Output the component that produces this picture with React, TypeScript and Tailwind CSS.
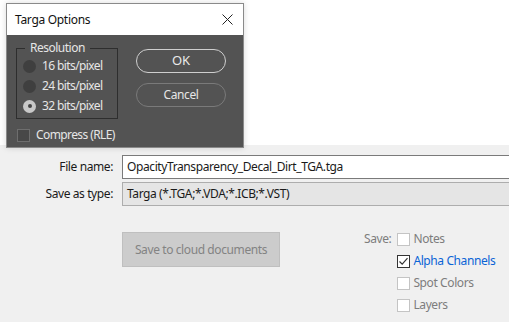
import React from 'react';

const font = { fontFamily: '"Noto Sans", "Open Sans", sans-serif' };

const Radio = ({ checked, label }: { checked?: boolean; label: string }) => (
  <div className="flex items-center h-[20px]">
    <div
      className={`w-[13px] h-[13px] rounded-full flex items-center justify-center ${
        checked ? 'bg-[#c8c8c8]' : 'bg-[#3f3f3f]'
      }`}
    >
      {checked && <div className="w-[4px] h-[4px] rounded-full bg-[#444]" />}
    </div>
    <span className="ml-[6px] text-[12px] tracking-[-0.6px] text-[#e6e6e6] leading-none">{label}</span>
  </div>
);

const Check = ({ checked, label, blue }: { checked?: boolean; label: string; blue?: boolean }) => (
  <div className="flex items-center h-[22px]">
    <div
      className={`w-[13px] h-[13px] flex items-center justify-center bg-white border ${
        checked ? 'border-[#333]' : 'border-[#c4c4c4]'
      }`}
    >
      {checked && (
        <svg width="11" height="11" viewBox="0 0 11 11">
          <path d="M1.5 5.5 L4.2 8.2 L9.5 2.2" fill="none" stroke="#333" strokeWidth="1.2" />
        </svg>
      )}
    </div>
    <span
      className={`ml-[3px] text-[12px] tracking-[-0.4px] leading-none ${
        blue ? 'text-[#0a64d6]' : 'text-[#7d7d7d]'
      }`}
    >
      {label}
    </span>
  </div>
);

export default function App() {
  return (
    <div className="relative w-[509px] h-[322px] overflow-hidden bg-[#f0f0f0]" style={font}>
      {/* underlying window */}
      <div className="h-[145px] bg-white" />
      <div className="pt-[10px] text-[12px] tracking-[-0.4px]">
        <div className="flex items-center h-[24px]">
          <span className="w-[113px] text-right text-[#1a1a1a]">File name:</span>
          <div className="ml-[9px] flex-1 h-[24px] bg-white border border-[#7a7a7a] border-r-0 flex items-center pl-[4px] text-[#1a1a1a]">
            OpacityTransparency_Decal_Dirt_TGA.tga
          </div>
        </div>
        <div className="flex items-center h-[24px] mt-[3px]">
          <span className="w-[113px] text-right text-[#1a1a1a]">Save as type:</span>
          <div className="ml-[9px] flex-1 h-[24px] bg-[#e5e5e5] border border-[#adadad] border-r-0 flex items-center pl-[4px] text-[#1a1a1a]">
            Targa (*.TGA;*.VDA;*.ICB;*.VST)
          </div>
        </div>
        <div className="flex mt-[26px]">
          <div className="ml-[122px] w-[158px] h-[35px] bg-[#cccccc] border border-[#bfbfbf] flex items-center justify-center text-[#838383]">
            Save to cloud documents
          </div>
          <div className="ml-[84px] flex">
            <span className="text-[#7d7d7d] mt-[-4px] leading-[22px]">Save:</span>
            <div className="ml-[6px] flex flex-col mt-[-4px]">
              <Check label="Notes" />
              <Check label="Alpha Channels" checked blue />
              <Check label="Spot Colors" />
              <Check label="Layers" />
            </div>
          </div>
        </div>
      </div>

      {/* Targa Options dialog */}
      <div className="absolute left-[6px] top-[3px] w-[238px] h-[145px] border border-[#8a8a8a] flex flex-col shadow-[0_0_6px_rgba(0,0,0,0.15)]">
        <div className="h-[31px] bg-white flex items-center justify-between pl-[8px] pr-[10px]">
          <span className="text-[12px] tracking-[-0.3px] text-[#111]">Targa Options</span>
          <svg width="11" height="11" viewBox="0 0 11 11">
            <path d="M0.5 0.5 L10.5 10.5 M10.5 0.5 L0.5 10.5" stroke="#222" strokeWidth="1" />
          </svg>
        </div>
        <div className="flex-1 bg-[#535353] px-[9px] pt-[13px]">
          <div className="flex">
            <div className="relative w-[102px] h-[71px] border border-[#2e2e2e] pt-[7px] pl-[6px]">
              <span className="absolute left-[8px] top-[-9px] bg-[#535353] px-[5px] text-[12px] tracking-[-0.5px] text-[#e6e6e6] leading-[16px]">
                Resolution
              </span>
              <Radio label="16 bits/pixel" />
              <Radio label="24 bits/pixel" />
              <Radio label="32 bits/pixel" checked />
            </div>
            <div className="ml-[18px] flex flex-col gap-[10px] pt-[1px]">
              <div className="w-[90px] h-[24px] rounded-full border-[1.5px] border-[#cfcfcf] flex items-center justify-center text-[13px] text-[#eaeaea]">
                OK
              </div>
              <div className="w-[90px] h-[24px] rounded-full border border-[#7a7a7a] flex items-center justify-center text-[12px] tracking-[-0.4px] text-[#e6e6e6]">
                Cancel
              </div>
            </div>
          </div>
          <div className="flex items-center mt-[7px] ml-[1px]">
            <div className="w-[13px] h-[13px] bg-[#484848] border border-[#6e6e6e]" />
            <span className="ml-[6px] text-[12px] tracking-[-0.6px] text-[#e6e6e6]">Compress (RLE)</span>
          </div>
        </div>
      </div>
    </div>
  );
}
